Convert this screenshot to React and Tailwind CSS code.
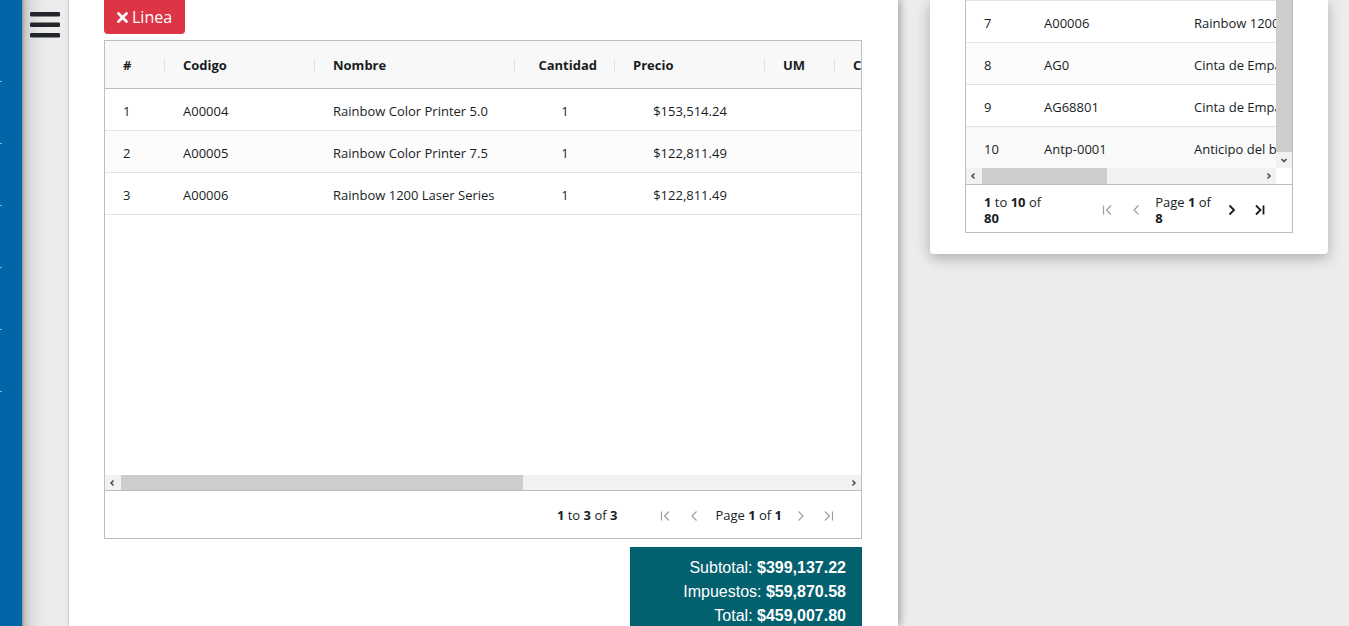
import React from "react";

const GRID_FONT = { fontFamily: '"Open Sans", "Noto Sans", sans-serif' };

function PagerIcon({ type, dark }) {
  const d = {
    first: "M4.5 3.5v9M12 3.5L7.5 8l4.5 4.5",
    prev: "M10.5 3.5L6 8l4.5 4.5",
    next: "M5.5 3.5L10 8l-4.5 4.5",
    last: "M4 3.5L8.5 8 4 12.5M11.5 3.5v9",
  }[type];
  return (
    <svg width="16" height="16" viewBox="0 0 16 16" className="shrink-0">
      <path
        d={d}
        fill="none"
        stroke={dark ? "#181d1f" : "#9aa0a6"}
        strokeWidth={dark ? 1.8 : 1.2}
      />
    </svg>
  );
}

function ScrollArrow({ dir }) {
  const d = {
    left: "M6.5 3.5L4 6l2.5 2.5",
    right: "M5.5 3.5L8 6l-2.5 2.5",
    down: "M3.5 5L6 7.5 8.5 5",
  }[dir];
  return (
    <svg width="12" height="12" viewBox="0 0 12 12">
      <path d={d} fill="none" stroke="#505050" strokeWidth="1.6" />
    </svg>
  );
}

const cols = [
  { w: 60, label: "#" },
  { w: 150, label: "Codigo" },
  { w: 200, label: "Nombre" },
  { w: 100, label: "Cantidad", right: true },
  { w: 150, label: "Precio" },
  { w: 70, label: "UM" },
  { w: 120, label: "C" },
];

const rows = [
  ["1", "A00004", "Rainbow Color Printer 5.0", "1", "$153,514.24"],
  ["2", "A00005", "Rainbow Color Printer 7.5", "1", "$122,811.49"],
  ["3", "A00006", "Rainbow 1200 Laser Series", "1", "$122,811.49"],
];

const rightRows = [
  ["7", "A00006", "Rainbow 1200 Laser Series", "bg-white"],
  ["8", "AG0", "Cinta de Empaque", "bg-[#fcfcfc]"],
  ["9", "AG68801", "Cinta de Empaque", "bg-white"],
  ["10", "Antp-0001", "Anticipo del bien", "bg-[#f9f9f9]"],
];

export default function App() {
  return (
    <div className="flex h-[626px] w-[1349px] overflow-hidden bg-[#ececec]">
      {/* blue sidebar */}
      <div className="flex w-[22px] shrink-0 flex-col gap-[61px] bg-[#0066a8] pt-[81px]">
        {[0, 1, 2, 3, 4, 5].map((i) => (
          <div key={i} className="h-px w-[2px] bg-[#8fb3d3]" />
        ))}
      </div>

      {/* gray strip with hamburger */}
      <div className="w-[47px] shrink-0 border-r border-[#d9d9d9] bg-[linear-gradient(to_right,#9a9a9a_0px,#c4c4c4_3px,#d9d9d9_8px,#e6e6e6_16px,#ececec_28px)] pl-[8px] pt-[12px]">
        <svg width="30" height="26" viewBox="0 0 30 26">
          <rect x="0" y="0" width="30" height="4.5" rx="1.2" fill="#222529" />
          <rect x="0" y="10.5" width="30" height="4.5" rx="1.2" fill="#222529" />
          <rect x="0" y="21" width="30" height="4.5" rx="1.2" fill="#222529" />
        </svg>
      </div>

      {/* main white panel */}
      <main
        className="relative z-10 flex w-[829px] shrink-0 flex-col bg-white pl-[35px] shadow-[3px_0_7px_rgba(0,0,0,0.28)]"
        style={GRID_FONT}
      >
        <button className="flex h-[34px] w-[81px] shrink-0 items-center gap-[4px] rounded-b-[4px] bg-[#dc3545] pl-[13px] text-[16px] text-white">
          <svg width="11" height="11" viewBox="0 0 11 11" className="shrink-0">
            <path d="M1.5 1.5l8 8M9.5 1.5l-8 8" stroke="white" strokeWidth="2.6" strokeLinecap="round" />
          </svg>
          <span className="leading-none">Linea</span>
        </button>

        {/* grid */}
        <div className="mt-[6px] flex h-[499px] w-[758px] shrink-0 flex-col border border-[#babfc7] text-[13px] text-[#181d1f]">
          {/* header */}
          <div className="flex h-[48px] shrink-0 overflow-hidden border-b border-[#babfc7] bg-[#f8f8f8] pt-[2px] font-bold">
            {cols.map((c, i) => (
              <div
                key={i}
                className="flex shrink-0 items-center"
                style={{ width: c.w }}
              >
                <div className={`flex-1 whitespace-nowrap pl-[18px] pr-[17px] ${c.right ? "text-right" : ""}`}>
                  {c.label}
                </div>
                {i < cols.length - 1 && <div className="h-[14px] w-px shrink-0 bg-[#dde2eb]" />}
              </div>
            ))}
          </div>

          {/* body */}
          <div className="min-h-0 flex-1 overflow-hidden">
            {rows.map((r, i) => (
              <div
                key={i}
                className={`flex h-[42px] items-center border-b border-[#dde2eb] pt-[5px] ${i === 1 ? "bg-[#fcfcfc]" : "bg-white"}`}
              >
                <div className="w-[60px] shrink-0 pl-[18px]">{r[0]}</div>
                <div className="w-[150px] shrink-0 pl-[18px]">{r[1]}</div>
                <div className="w-[200px] shrink-0 whitespace-nowrap pl-[18px]">{r[2]}</div>
                <div className="w-[100px] shrink-0 text-center">{r[3]}</div>
                <div className="w-[150px] shrink-0 text-center">{r[4]}</div>
              </div>
            ))}
          </div>

          {/* horizontal scrollbar */}
          <div className="flex h-[16px] shrink-0 border-b border-[#babfc7] bg-[#f1f1f1]">
            <div className="flex w-[16px] items-center justify-center">
              <ScrollArrow dir="left" />
            </div>
            <div className="flex-1">
              <div className="h-full w-[402px] bg-[#cdcdcd]" />
            </div>
            <div className="flex w-[16px] items-center justify-center">
              <ScrollArrow dir="right" />
            </div>
          </div>

          {/* paging */}
          <div className="flex h-[47px] shrink-0 items-center justify-end pr-[24px] pt-[3px]">
            <span>
              <b>1</b> to <b>3</b> of <b>3</b>
            </span>
            <span className="ml-[40px]"><PagerIcon type="first" /></span>
            <span className="ml-[13px]"><PagerIcon type="prev" /></span>
            <span className="ml-[13px]">
              Page <b>1</b> of <b>1</b>
            </span>
            <span className="ml-[11px]"><PagerIcon type="next" /></span>
            <span className="ml-[12px]"><PagerIcon type="last" /></span>
          </div>
        </div>

        {/* totals */}
        <div
          className="ml-[526px] mt-[8px] min-h-0 w-[232px] flex-1 overflow-hidden bg-[#03606f] pr-[16px] pt-[9px] text-right text-[16px] leading-[24px] text-white"
          style={{ fontFamily: '"Liberation Sans", Arial, sans-serif' }}
        >
          <div>
            Subtotal: <b>$399,137.22</b>
          </div>
          <div>
            Impuestos: <b>$59,870.58</b>
          </div>
          <div>
            Total: <b>$459,007.80</b>
          </div>
        </div>
      </main>

      {/* right area */}
      <div className="pl-[32px]" style={GRID_FONT}>
        <div className="w-[398px] rounded-b-[4px] bg-white px-[35px] pb-[21px] shadow-[0_4px_14px_rgba(0,0,0,0.28)]">
          <div className="w-[328px] border-x border-b border-[#babfc7] text-[13px] text-[#181d1f]">
            <div className="flex h-[168px]">
              <div className="w-[310px] overflow-hidden border-t border-[#dde2eb]">
                {rightRows.map((r, i) => (
                  <div key={i} className={`flex h-[42px] shrink-0 items-center border-b border-[#dde2eb] pt-[4px] ${r[3]}`}>
                    <div className="w-[60px] shrink-0 pl-[18px]">{r[0]}</div>
                    <div className="w-[150px] shrink-0 pl-[18px]">{r[1]}</div>
                    <div className="w-[200px] shrink-0 whitespace-nowrap pl-[18px]">{r[2]}</div>
                  </div>
                ))}
              </div>
              <div className="flex w-[16px] flex-col bg-[#f1f1f1]">
                <div className="h-[152px] bg-[#cdcdcd]" />
                <div className="flex flex-1 items-center justify-center">
                  <ScrollArrow dir="down" />
                </div>
              </div>
            </div>
            <div className="flex h-[16px]">
              <div className="flex w-[310px] bg-[#f1f1f1]">
                <div className="flex w-[16px] items-center justify-center">
                  <ScrollArrow dir="left" />
                </div>
                <div className="flex-1">
                  <div className="h-full w-[125px] bg-[#cdcdcd]" />
                </div>
                <div className="flex w-[16px] items-center justify-center">
                  <ScrollArrow dir="right" />
                </div>
              </div>
              <div className="w-[16px] bg-white" />
            </div>
            <div className="flex h-[48px] items-center border-t border-[#babfc7] pl-[18px] pr-[24px] pt-[2px] leading-[16px]">
              <div>
                <div>
                  <b>1</b> to <b>10</b> of
                </div>
                <div>
                  <b>80</b>
                </div>
              </div>
              <span className="ml-auto"><PagerIcon type="first" /></span>
              <span className="ml-[13px]"><PagerIcon type="prev" /></span>
              <div className="ml-[11px]">
                <div>
                  Page <b>1</b> of
                </div>
                <div>
                  <b>8</b>
                </div>
              </div>
              <span className="ml-[13px]"><PagerIcon type="next" dark /></span>
              <span className="ml-[12px]"><PagerIcon type="last" dark /></span>
            </div>
          </div>
        </div>
      </div>
    </div>
  );
}
